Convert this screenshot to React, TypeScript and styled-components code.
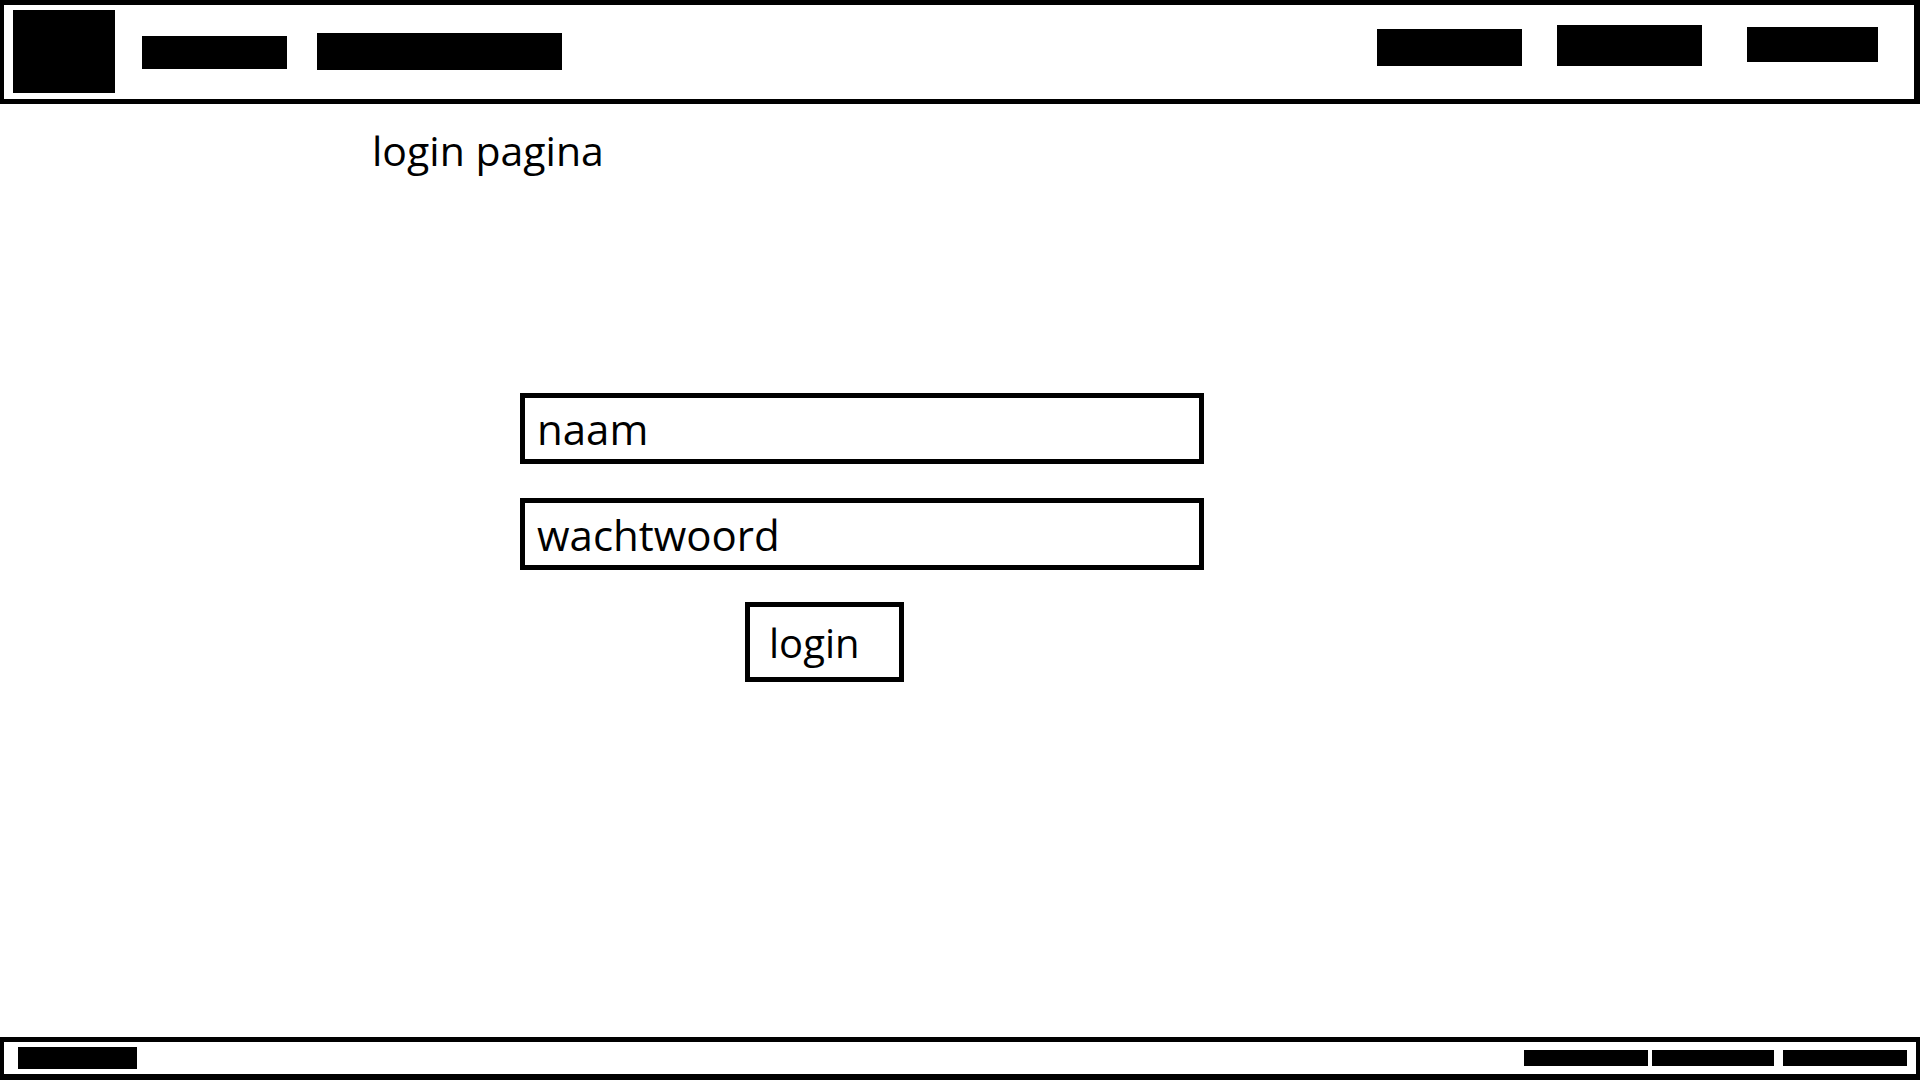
import styled, { createGlobalStyle } from 'styled-components';

const GlobalStyle = createGlobalStyle`
  html, body {
    margin: 0;
    padding: 0;
    background: #fff;
  }
  body {
    font-family: 'Open Sans', 'Noto Sans', sans-serif;
    color: #000;
  }
  * { box-sizing: border-box; }
`;

const Page = styled.div`
  min-height: 100vh;
  display: flex;
  flex-direction: column;
`;

const Header = styled.header`
  height: 104px;
  border: 5px solid #000;
  border-left-width: 4px;
  border-right-width: 6px;
  display: flex;
  align-items: flex-start;
  padding: 0 36px 0 9px;
`;

// placeholder blocks of the wireframe (logo, nav items)
const Block = styled.div<{ $w: number; $h: number; $top: number; $left?: number }>`
  width: ${p => p.$w}px;
  height: ${p => p.$h}px;
  margin-top: ${p => p.$top}px;
  margin-left: ${p => p.$left ?? 0}px;
  background: #000;
  flex-shrink: 0;
`;

const NavLeft = styled.nav`
  display: flex;
  align-items: flex-start;
  margin-left: 27px;
`;

const NavRight = styled.nav`
  margin-left: auto;
  display: flex;
  align-items: flex-start;
`;

const Main = styled.main`
  flex: 1;
  display: flex;
  flex-direction: column;
`;

const Title = styled.h1`
  margin: 26px 0 0 372px;
  font-size: 41px;
  font-weight: 400;
  line-height: 1;
`;

const Form = styled.form`
  margin: 222px 0 0 520px;
  width: 684px;
  display: flex;
  flex-direction: column;
`;

const Field = styled.input<{ $h: number }>`
  height: ${p => p.$h}px;
  width: 100%;
  border: 5px solid #000;
  border-radius: 0;
  padding: 0 0 0 12px;
  font-family: inherit;
  font-size: 42px;
  color: #000;
  outline: none;
  background: #fff;

  &::placeholder {
    color: #000;
    opacity: 1;
  }

  & + & {
    margin-top: 34px;
  }
`;

const Button = styled.button`
  margin: 32px 0 0 225px;
  width: 159px;
  height: 80px;
  border: 5px solid #000;
  border-radius: 0;
  background: #fff;
  display: flex;
  align-items: center;
  padding: 0 0 0 19px;
  font-family: inherit;
  font-size: 40px;
  color: #000;
  cursor: pointer;
`;

const Footer = styled.footer`
  height: 43px;
  border: 5px solid #000;
  border-left-width: 4px;
  border-right-width: 4px;
  border-bottom-width: 6px;
  display: flex;
  align-items: center;
  padding: 0 9px 0 14px;
`;

const FooterLinks = styled.div`
  margin-left: auto;
  display: flex;
  align-items: center;
`;

const FooterBar = styled.div<{ $w: number; $h: number; $gap?: number }>`
  width: ${p => p.$w}px;
  height: ${p => p.$h}px;
  margin-left: ${p => p.$gap ?? 0}px;
  background: #000;
`;

export default function App() {
  return (
    <Page>
      <GlobalStyle />
      <Header>
        <Block $w={102} $h={83} $top={5} />
        <NavLeft>
          <Block $w={145} $h={33} $top={31} />
          <Block $w={245} $h={37} $top={28} $left={30} />
        </NavLeft>
        <NavRight>
          <Block $w={145} $h={37} $top={24} />
          <Block $w={145} $h={41} $top={20} $left={35} />
          <Block $w={131} $h={35} $top={22} $left={45} />
        </NavRight>
      </Header>
      <Main>
        <Title>login pagina</Title>
        <Form onSubmit={e => e.preventDefault()}>
          <Field $h={71} type="text" placeholder="naam" />
          <Field $h={72} type="password" placeholder="wachtwoord" />
          <Button type="submit">login</Button>
        </Form>
      </Main>
      <Footer>
        <FooterBar $w={119} $h={22} />
        <FooterLinks>
          <FooterBar $w={124} $h={16} />
          <FooterBar $w={122} $h={16} $gap={4} />
          <FooterBar $w={124} $h={16} $gap={9} />
        </FooterLinks>
      </Footer>
    </Page>
  );
}
